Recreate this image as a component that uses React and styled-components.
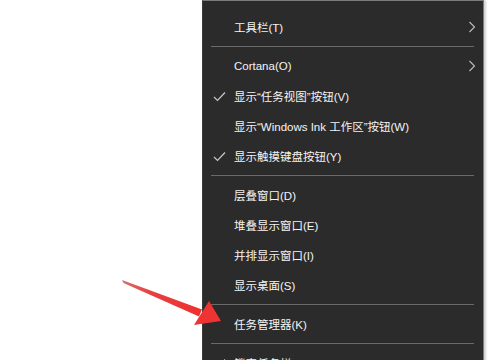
import styled, { createGlobalStyle } from "styled-components";

const GlobalStyle = createGlobalStyle`
  html, body { margin: 0; padding: 0; background: #fff; }
  body { font-family: "Liberation Sans", "Noto Sans CJK SC", sans-serif; }
`;

const items = [
  { label: "工具栏(T)", sub: true },
  { sep: true },
  { label: "Cortana(O)", sub: true },
  { label: "显示“任务视图”按钮(V)", checked: true },
  { label: "显示“Windows Ink 工作区”按钮(W)" },
  { label: "显示触摸键盘按钮(Y)", checked: true },
  { sep: true },
  { label: "层叠窗口(D)" },
  { label: "堆叠显示窗口(E)" },
  { label: "并排显示窗口(I)" },
  { label: "显示桌面(S)" },
  { sep: true },
  { label: "任务管理器(K)" },
  { sep: true },
  { label: "锁定任务栏(L)", checked: true },
];

function Check() {
  return (
    <svg width="13" height="11" viewBox="0 0 13 11">
      <polyline points="1,6 4.5,9.5 12,1.5" fill="none" stroke="#c8c8c8" strokeWidth="1.2" />
    </svg>
  );
}

function Chevron() {
  return (
    <svg width="8" height="12" viewBox="0 0 8 12">
      <polyline points="1.5,1 6.5,6 1.5,11" fill="none" stroke="#b8b8b8" strokeWidth="1.2" />
    </svg>
  );
}

function Arrow() {
  return (
    <ArrowSvg width="110" height="60" viewBox="120 275 110 60">
      <defs>
        <linearGradient id="shaft" x1="122" y1="281" x2="200" y2="313" gradientUnits="userSpaceOnUse">
          <stop offset="0" stopColor="#d87070" />
          <stop offset="0.35" stopColor="#e84040" />
          <stop offset="1" stopColor="#ee3030" />
        </linearGradient>
      </defs>
      <polygon points="122,280 123.5,283 199,316.5 202,309.5" fill="url(#shaft)" />
      <polygon points="209,301 221,321 194,325" fill="#ee3333" />
    </ArrowSvg>
  );
}

export default function App() {
  return (
    <>
      <GlobalStyle />
      <Page>
        <Menu>
          {items.map((it, i) =>
            it.sep ? (
              <Separator key={i} />
            ) : (
              <Item key={i}>
                <Mark>{it.checked && <Check />}</Mark>
                <Label>{it.label}</Label>
                <Sub>{it.sub && <Chevron />}</Sub>
              </Item>
            )
          )}
        </Menu>
        <Arrow />
      </Page>
    </>
  );
}

const Page = styled.div`
  position: relative;
  width: 488px;
  height: 360px;
  overflow: hidden;
  display: flex;
  padding-left: 202px;
  box-sizing: border-box;
  background: #fff;
`;

const Menu = styled.div`
  width: 282px;
  height: 400px;
  box-sizing: border-box;
  background: #2b2b2b;
  border: 1px solid #7c7c7c;
  border-left-color: #3a3a3a;
  box-shadow: 2px 0 2px rgba(0, 0, 0, 0.18);
  padding-top: 11px;
  display: flex;
  flex-direction: column;
`;

const Item = styled.div`
  height: 30px;
  flex: none;
  display: flex;
  align-items: center;
`;

const Mark = styled.div`
  width: 31px;
  padding-left: 10px;
  box-sizing: border-box;
  display: flex;
  align-items: center;
`;

const Label = styled.span`
  flex: 1;
  color: #f4f4f4;
  font-size: 11.5px;
  white-space: nowrap;
`;

const Sub = styled.div`
  width: 20px;
  margin-right: 7px;
  display: flex;
  justify-content: flex-end;
`;

const Separator = styled.div`
  flex: none;
  height: 1px;
  margin: 4px 9px 4px 8px;
  background: #6a6a6a;
`;

const ArrowSvg = styled.svg`
  position: absolute;
  left: 120px;
  top: 275px;
`;
